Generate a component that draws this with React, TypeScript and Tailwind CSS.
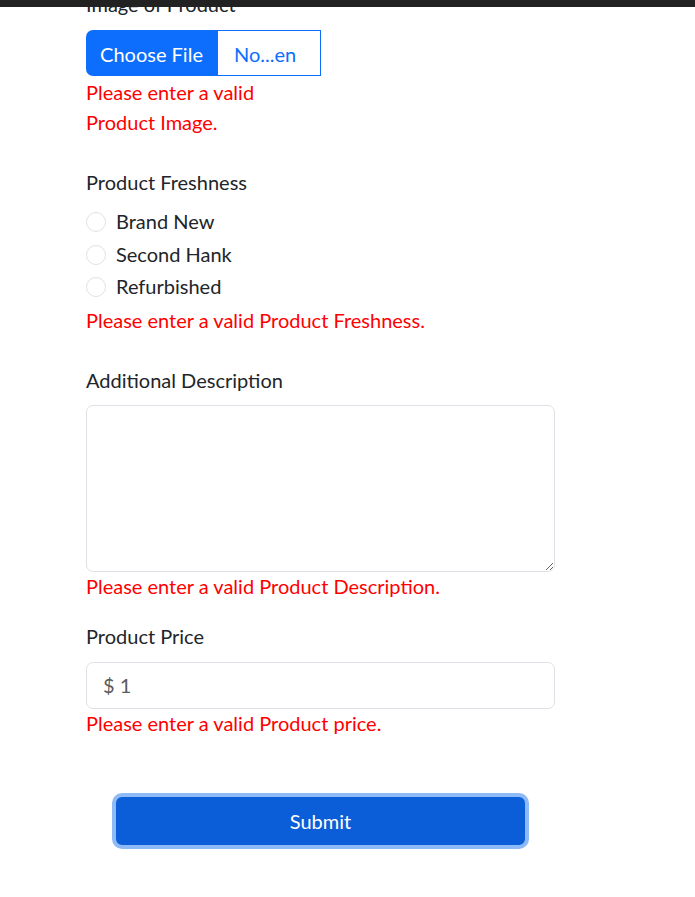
import * as React from "react";

const font = { fontFamily: 'Lato, "Noto Sans", "Liberation Sans", sans-serif' };

function ErrorText({ children }: { children: React.ReactNode }) {
  return <div className="relative -top-px text-[20px] leading-[30px] text-[#ff0000]">{children}</div>;
}

function Label({ children }: { children: React.ReactNode }) {
  return <label className="relative -top-px mb-[10px] block text-[20px] leading-[30px] text-[#212529]">{children}</label>;
}

function Radio({ label }: { label: string }) {
  return (
    <div className="mb-[2.5px] flex h-[30px] items-center">
      <span className="relative -top-px h-[20px] w-[20px] shrink-0 rounded-full border border-[#dee2e6] bg-white" />
      <span className="relative -top-[2px] ml-[10px] text-[20px] leading-[30px] text-[#212529]">{label}</span>
    </div>
  );
}

export default function App() {
  return (
    <div className="relative min-h-[897px] overflow-hidden bg-white" style={font}>
      <div className="absolute inset-x-0 top-0 z-10 h-[7px] bg-[#222222]" />

      <form className="pl-[86px]" onSubmit={(e) => e.preventDefault()}>
        {/* image */}
        <div className="-mt-[10px] w-[235px]">
          <Label>Image of Product</Label>
          <div className="flex h-[46px] w-[235px] text-[20px]">
            <button type="button" className="w-[131px] rounded-l-[7px] bg-[#0d6efd] pt-[2px] text-white">
              Choose File
            </button>
            <div className="flex flex-1 items-center border border-[#0d6efd] bg-white pl-[16px] pt-[1px] text-[#0d6efd]">
              No...en
            </div>
          </div>
          <div className="mt-[2px]">
            <ErrorText>Please enter a valid Product Image.</ErrorText>
          </div>
        </div>

        {/* freshness */}
        <div className="mt-[30px]">
          <Label>Product Freshness</Label>
          <Radio label="Brand New" />
          <Radio label="Second Hank" />
          <Radio label="Refurbished" />
          <ErrorText>Please enter a valid Product Freshness.</ErrorText>
        </div>

        {/* description */}
        <div className="mt-[30px] w-[469px]">
          <Label>Additional Description</Label>
          <textarea className="-mt-px block h-[167px] w-full resize-y rounded-[7px] border border-[#dee2e6] bg-white px-[15px] py-[7px] text-[20px] outline-none" />
          <ErrorText>Please enter a valid Product Description.</ErrorText>
        </div>

        {/* price */}
        <div className="mt-[20px] w-[469px]">
          <Label>Product Price</Label>
          <input
            defaultValue="$ 1"
            className="block h-[47px] w-full rounded-[7px] border border-[#dee2e6] bg-white px-[16px] text-[20px] text-[#595c5f] outline-none"
          />
          <ErrorText>Please enter a valid Product price.</ErrorText>
        </div>

        <div className="mt-[54px] w-[442px] pl-[26px]">
          <button
            type="submit"
            className="h-[56px] w-[417px] rounded-[10px] border-[4px] border-[#8fbaf8] bg-[#0b5ed7] text-[20px] text-white"
          >
            Submit
          </button>
        </div>
      </form>
    </div>
  );
}
